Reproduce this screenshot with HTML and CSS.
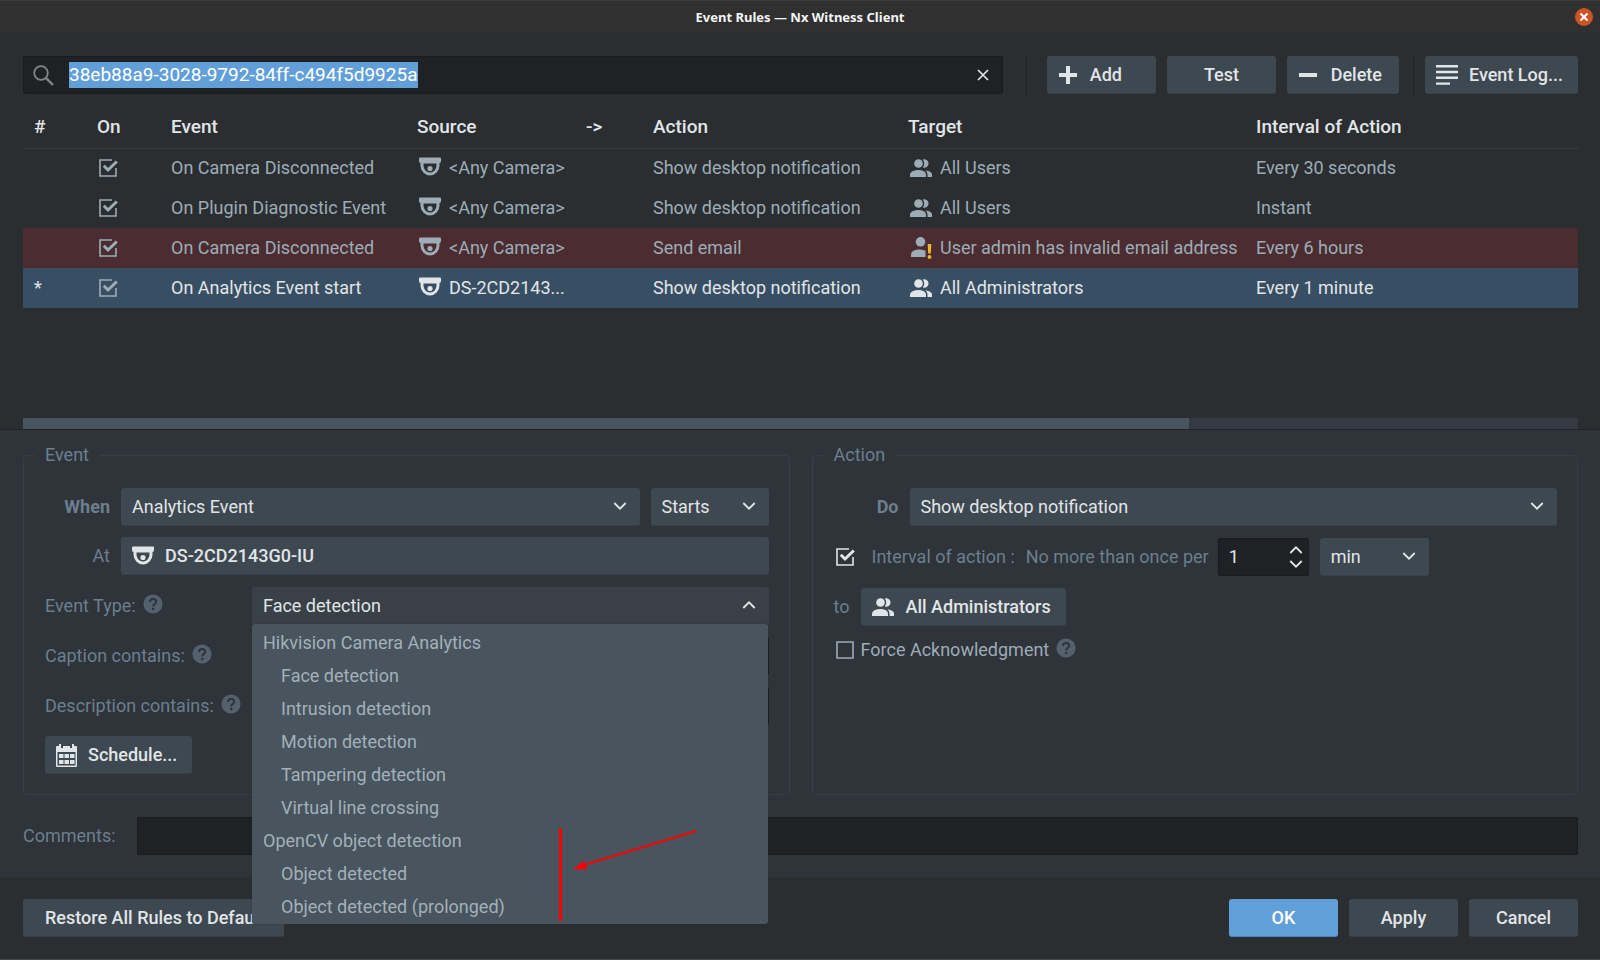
FILE: index.html
```html
<!DOCTYPE html>
<html lang="en">
<head>
<meta charset="utf-8">
<title>Event Rules — Nx Witness Client</title>
<link rel="stylesheet" href="styles.css">
</head>
<body>
<svg class="sprite" aria-hidden="true">
  <symbol id="i-camera" viewBox="0 0 22 20">
    <path d="M0 1.500Q0 .5 1 .5H21Q22 .5 22 1.500V4Q22 6 20.500 6V8.500A9.500 10 0 0 1 1.500 8.500V6Q0 6 0 4Z M4.500 6.500V8.500A6.500 7 0 0 0 17.500 8.500V6.500Z" fill="currentColor" fill-rule="evenodd"/>
    <circle cx="11" cy="11.500" r="2.600" fill="currentColor"/>
  </symbol>
  <symbol id="i-users" viewBox="0 0 22 18">
    <circle cx="8.500" cy="4.500" r="4.300" fill="currentColor"/>
    <path d="M0 18V15.500Q0 13.500 2.500 12.300Q8.500 9.800 14 12.300Q16 13.500 16 15.500V18Z" fill="currentColor"/>
    <path d="M12.800 .6A4.200 4.200 0 1 1 12.800 8.400Q15.600 4.500 12.800 .6Z" fill="currentColor"/>
    <path d="M15.500 11.300Q22 12.500 22 15.500V18H17.500V15.500Q17.500 13 15.500 11.300Z" fill="currentColor"/>
  </symbol>
  <symbol id="i-user-warn" viewBox="0 0 22 22">
    <circle cx="10.500" cy="4.800" r="4.800" fill="currentColor"/>
    <path d="M1 20V17.500Q1 15 3.500 13.700Q9 11.200 15.500 13.700V20Z" fill="currentColor"/>
    <path d="M17.700 7H21.300L20.800 16.500H18.200Z" fill="#efb62b"/>
    <circle cx="19.500" cy="20" r="1.900" fill="#efb62b"/>
  </symbol>
  <symbol id="i-tick" viewBox="0 0 20 18">
    <path d="M13 1H1V17H17V9" fill="none" stroke="currentColor" stroke-width="1.600"/>
    <path d="M4.800 6.800L9 11L17.800 2.500" fill="none" stroke="currentColor" stroke-width="3"/>
  </symbol>
  <symbol id="i-box" viewBox="0 0 20 18">
    <path d="M1 1H17V17H1Z" fill="none" stroke="currentColor" stroke-width="1.600"/>
  </symbol>
  <symbol id="i-down" viewBox="0 0 14 8">
    <path d="M1.300 1L7 6.700L12.700 1" fill="none" stroke="currentColor" stroke-width="1.800"/>
  </symbol>
  <symbol id="i-up" viewBox="0 0 14 8">
    <path d="M1.300 7L7 1.300L12.700 7" fill="none" stroke="currentColor" stroke-width="1.800"/>
  </symbol>
  <symbol id="i-help" viewBox="0 0 20 20">
    <circle cx="10" cy="10" r="9.600" fill="#52616d"/>
    <path d="M7 8Q7 4.900 10.100 4.900Q13.200 4.900 13.200 7.600Q13.200 9 11.500 10.200Q10.200 11 10.200 12.600" fill="none" stroke="#2f333a" stroke-width="2"/>
    <circle cx="10.200" cy="15" r="1.300" fill="#2f333a"/>
  </symbol>
</svg>

<header class="titlebar">
  <h1 class="titlebar-text">Event Rules — Nx Witness Client</h1>
  <button class="window-close" aria-label="Close window">
    <svg width="18" height="18" viewBox="0 0 18 18"><path d="M5.500 5.500L12.500 12.500M12.500 5.500L5.500 12.500" stroke="#fff" stroke-width="2"/></svg>
  </button>
</header>

<main class="rules">
  <div class="toolbar">
    <div class="search">
      <svg class="search-icon" width="21" height="21" viewBox="0 0 21 21"><circle cx="8" cy="8" r="6.800" fill="none" stroke="#7f8588" stroke-width="1.800"/><path d="M12.800 12.800L20 20" stroke="#7f8588" stroke-width="2.400"/></svg>
      <input class="search-input" id="search" type="text" aria-label="Search rules" value="38eb88a9-3028-9792-84ff-c494f5d9925a">
      <button class="search-clear" aria-label="Clear search"><svg width="12" height="12" viewBox="0 0 12 12"><path d="M1 1L11 11M11 1L1 11" stroke="currentColor" stroke-width="1.700"/></svg></button>
    </div>
    <div class="tools">
      <button class="btn btn-tool btn-split"><svg width="18" height="18" viewBox="0 0 18 18"><path d="M9 0V18M0 9H18" stroke="currentColor" stroke-width="4"/></svg><span>Add</span></button>
      <button class="btn btn-tool">Test</button>
      <button class="btn btn-tool btn-split"><svg width="18" height="18" viewBox="0 0 18 18"><path d="M0 9H18" stroke="currentColor" stroke-width="4"/></svg><span>Delete</span></button>
    </div>
    <div class="log">
      <button class="btn btn-icon"><svg width="22" height="20" viewBox="0 0 22 20"><path d="M0 1.200H22M0 7H22M0 12.800H22M0 18.600H14" stroke="currentColor" stroke-width="2.400"/></svg><span>Event Log...</span></button>
    </div>
  </div>

  <table class="table">
    <colgroup><col class="c-num"><col class="c-on"><col class="c-event"><col class="c-source"><col class="c-arrow"><col class="c-action"><col class="c-target"><col></colgroup>
    <thead>
      <tr><th>#</th><th>On</th><th>Event</th><th>Source</th><th>-&gt;</th><th>Action</th><th>Target</th><th>Interval of Action</th></tr>
    </thead>
    <tbody>
      <tr>
        <td></td>
        <td><span class="check"><input type="checkbox" checked aria-label="Rule 1 on"><svg><use href="#i-tick"/></svg></span></td>
        <td>On Camera Disconnected</td>
        <td><span class="cell"><svg class="ic-camera"><use href="#i-camera"/></svg>&lt;Any Camera&gt;</span></td>
        <td></td>
        <td>Show desktop notification</td>
        <td><span class="cell"><svg class="ic-users"><use href="#i-users"/></svg>All Users</span></td>
        <td>Every 30 seconds</td>
      </tr>
      <tr>
        <td></td>
        <td><span class="check"><input type="checkbox" checked aria-label="Rule 2 on"><svg><use href="#i-tick"/></svg></span></td>
        <td>On Plugin Diagnostic Event</td>
        <td><span class="cell"><svg class="ic-camera"><use href="#i-camera"/></svg>&lt;Any Camera&gt;</span></td>
        <td></td>
        <td>Show desktop notification</td>
        <td><span class="cell"><svg class="ic-users"><use href="#i-users"/></svg>All Users</span></td>
        <td>Instant</td>
      </tr>
      <tr class="row-invalid">
        <td></td>
        <td><span class="check"><input type="checkbox" checked aria-label="Rule 3 on"><svg><use href="#i-tick"/></svg></span></td>
        <td>On Camera Disconnected</td>
        <td><span class="cell"><svg class="ic-camera"><use href="#i-camera"/></svg>&lt;Any Camera&gt;</span></td>
        <td></td>
        <td>Send email</td>
        <td><span class="cell"><svg class="ic-warn"><use href="#i-user-warn"/></svg>User admin has invalid email address</span></td>
        <td>Every 6 hours</td>
      </tr>
      <tr class="row-selected">
        <td>*</td>
        <td><span class="check"><input type="checkbox" checked aria-label="Rule 4 on"><svg><use href="#i-tick"/></svg></span></td>
        <td>On Analytics Event start</td>
        <td><span class="cell"><svg class="ic-camera"><use href="#i-camera"/></svg>DS-2CD2143...</span></td>
        <td></td>
        <td>Show desktop notification</td>
        <td><span class="cell"><svg class="ic-users"><use href="#i-users"/></svg>All Administrators</span></td>
        <td>Every 1 minute</td>
      </tr>
    </tbody>
  </table>
  <div class="scrollbar"><div class="scrollbar-thumb"></div></div>
</main>

<section class="editor">
  <div class="groups">
    <fieldset class="group group-event">
      <legend>Event</legend>
      <div class="line line-short">
        <label class="strong" for="when">When</label>
        <div class="pair">
          <div class="select"><select id="when"><option>Analytics Event</option></select><svg><use href="#i-down"/></svg></div>
          <div class="select select-starts"><select aria-label="Event state"><option>Starts</option></select><svg><use href="#i-down"/></svg></div>
        </div>
      </div>
      <div class="line line-short">
        <label for="at">At</label>
        <button class="btn btn-icon btn-wide" id="at"><svg class="ic-camera"><use href="#i-camera"/></svg><span>DS-2CD2143G0-IU</span></button>
      </div>
      <div class="line line-long">
        <div class="caption"><label for="type">Event Type:</label><svg class="help"><use href="#i-help"/></svg></div>
        <div class="combo">
          <div class="select select-open"><select id="type"><option>Face detection</option></select><svg><use href="#i-up"/></svg></div>
          <div class="menu">
            <ul class="menu-list" role="listbox" aria-label="Event types">
              <li>Hikvision Camera Analytics</li>
              <li class="sub" role="option">Face detection</li>
              <li class="sub" role="option">Intrusion detection</li>
              <li class="sub" role="option">Motion detection</li>
              <li class="sub" role="option">Tampering detection</li>
              <li class="sub" role="option">Virtual line crossing</li>
              <li>OpenCV object detection</li>
              <li class="sub" role="option">Object detected</li>
              <li class="sub" role="option">Object detected (prolonged)</li>
            </ul>
            <svg class="marker" width="140" height="96" viewBox="0 0 140 96" aria-hidden="true">
              <path d="M2.500 1V94" stroke="#f00" stroke-width="3"/>
              <path d="M138 4L26 38" stroke="#f00" stroke-width="2"/>
              <path d="M15 42L26 34L29 42.500Z" fill="#f00"/>
            </svg>
          </div>
        </div>
      </div>
      <div class="line line-long">
        <div class="caption"><label for="cap">Caption contains:</label><svg class="help"><use href="#i-help"/></svg></div>
        <input class="field" id="cap" type="text">
      </div>
      <div class="line line-long">
        <div class="caption"><label for="desc">Description contains:</label><svg class="help"><use href="#i-help"/></svg></div>
        <input class="field" id="desc" type="text">
      </div>
      <div class="line">
        <button class="btn btn-icon btn-schedule"><svg width="21" height="24" viewBox="0 0 21 24"><path d="M0 4Q0 3 1 3H3V1H5V5H7V3H14V5H16V1H18V3H20Q21 3 21 4V23Q21 24 20 24H1Q0 24 0 23Z M1.500 9V22.500H19.500V9Z" fill="currentColor" fill-rule="evenodd"/><path d="M3 11H7.500V15H3ZM8.500 11H13V15H8.500ZM14 11H18.500V15H14ZM3 17H7.500V21H3ZM8.500 17H13V21H8.500ZM14 17H18.500V21H14Z" fill="currentColor"/></svg><span>Schedule...</span></button>
      </div>
    </fieldset>

    <fieldset class="group group-action">
      <legend>Action</legend>
      <div class="line line-short">
        <label class="strong" for="do">Do</label>
        <div class="select"><select id="do"><option>Show desktop notification</option></select><svg><use href="#i-down"/></svg></div>
      </div>
      <div class="line interval">
        <span class="check check-bright"><input id="interval" type="checkbox" checked><svg><use href="#i-tick"/></svg></span>
        <label for="interval">Interval of action :</label>
        <label class="once" for="count">No more than once per</label>
        <div class="spin">
          <input id="count" type="text" inputmode="numeric" value="1">
          <div class="spin-buttons">
            <button aria-label="Increase"><svg><use href="#i-up"/></svg></button>
            <button aria-label="Decrease"><svg><use href="#i-down"/></svg></button>
          </div>
        </div>
        <div class="select select-unit"><select aria-label="Unit"><option>min</option></select><svg><use href="#i-down"/></svg></div>
      </div>
      <div class="line to">
        <label for="recipients">to</label>
        <button class="btn btn-icon" id="recipients"><svg class="ic-users"><use href="#i-users"/></svg><span>All Administrators</span></button>
      </div>
      <div class="force">
        <span class="check"><input id="force" type="checkbox"><svg><use href="#i-box"/></svg></span>
        <label for="force">Force Acknowledgment</label>
        <svg class="help"><use href="#i-help"/></svg>
      </div>
    </fieldset>
  </div>
  <div class="comments">
    <label for="comments">Comments:</label>
    <input class="field" id="comments" type="text">
  </div>
</section>

<footer class="footer">
  <button class="btn btn-restore">Restore All Rules to Default</button>
  <div class="footer-actions">
    <button class="btn btn-primary">OK</button>
    <button class="btn">Apply</button>
    <button class="btn">Cancel</button>
  </div>
</footer>
<script src="app.js"></script>
</body>
</html>
```
FILE: styles.css
```css
* { box-sizing: border-box; }

body {
  margin: 0;
  min-height: 100vh;
  display: flex;
  flex-direction: column;
  background: #2a2e31;
  border-bottom: 1px solid #4a4a4c;
  color: #6b7f8e;
  font: 18px/22px Roboto, "Liberation Sans", sans-serif;
}

button, input, select { font: inherit; color: inherit; margin: 0; }
button { border: 0; padding: 0; background: none; }
.sprite { position: absolute; width: 0; height: 0; }
svg { flex: none; display: block; }

.titlebar {
  display: grid;
  grid-template-columns: 1fr auto 1fr;
  align-items: center;
  height: 33px;
  padding: 0 7px;
  background: #303030;
  border-top: 1px solid #3c3c3c;
}
.titlebar-text {
  grid-column: 2;
  margin: 0;
  color: #f5f5f5;
  font: 700 13px/20px "Noto Sans", "Open Sans", sans-serif;
}
.window-close {
  justify-self: end;
  width: 18px;
  height: 18px;
  border-radius: 50%;
  background: #cc5427;
}

.rules {
  flex: 1;
  display: flex;
  flex-direction: column;
  padding: 23px 22px 0 23px;
}
.toolbar { display: flex; align-items: stretch; }
.search {
  flex: 1;
  display: flex;
  align-items: center;
  height: 38px;
  margin-right: 23px;
  padding: 0 13px 0 9px;
  background: #1f2224;
  border: 1px solid #191c1e;
  border-radius: 2px;
}
.search-input {
  flex: 1;
  min-width: 0;
  height: 26px;
  margin-left: 15px;
  padding: 0;
  border: 0;
  outline: 0;
  background: none;
  color: #fff;
  font-size: 19px;
  line-height: 26px;
}
.search-input::selection { background: #629fd9; color: #fff; }
.search-clear { color: #e1e4e6; }
.tools { display: flex; gap: 11px; padding-left: 20px; border-left: 1px solid #1f2224; }
.log { margin-left: 14px; padding-left: 11px; border-left: 1px solid #1f2224; }

.btn {
  display: flex;
  align-items: center;
  justify-content: center;
  height: 38px;
  min-width: 109px;
  background: #3e4850;
  border-bottom: 1px solid #384149;
  border-radius: 3px;
  color: #e1e5e8;
  font-weight: 500;
}
.btn-split { justify-content: space-between; padding: 0 34px 0 12px; }
.btn-split:last-child { width: 112px; padding-right: 17px; }
.btn-icon { gap: 11px; padding: 0 15px 0 11px; }

.table { width: 100%; border-collapse: collapse; table-layout: fixed; color: #9dacb6; }
.c-num { width: 63px; }
.c-on { width: 74px; }
.c-event { width: 246px; }
.c-source { width: 169px; }
.c-arrow { width: 67px; }
.c-action { width: 255px; }
.c-target { width: 348px; }
.table th {
  height: 54px;
  padding: 12px 0 0 11px;
  border-bottom: 1px solid #383e43;
  color: #e1e5e8;
  font-size: 19px;
  font-weight: 500;
  text-align: left;
}
.table td { height: 40px; padding: 0 0 0 11px; white-space: nowrap; }
.row-invalid { background: #4b2d31; }
.row-selected { background: #384e63; color: #e1e5e8; }
.cell { display: flex; align-items: center; gap: 8px; }
.ic-camera { width: 22px; height: 20px; }
.cell .ic-camera { margin: 0 0 3px 2px; }
.ic-users { width: 22px; height: 18px; }
.ic-warn { width: 22px; height: 22px; }
.cell .ic-users, .cell .ic-warn { margin-left: 2px; }

.check { display: grid; width: 20px; height: 18px; margin-left: 2px; color: #9dacb6; }
.check input { grid-area: 1 / 1; width: 18px; height: 18px; appearance: none; }
.check svg { grid-area: 1 / 1; width: 20px; height: 18px; pointer-events: none; }
.check-bright { color: #e1e5e8; }

.scrollbar { height: 11px; margin-top: auto; background: #343a41; }
.scrollbar-thumb { width: 75%; height: 100%; background: #48545e; }

.editor {
  padding: 15px 22px 22px 23px;
  background: #2f333a;
  border-top: 1px solid #212527;
}
.groups { display: grid; grid-template-columns: 1fr 1fr; gap: 22px; }
.group {
  display: flex;
  flex-direction: column;
  gap: 11px;
  min-width: 0;
  margin: 0;
  padding: 23px 20px 20px 21px;
  border: 1px solid #383e45;
  border-radius: 4px;
}
.group legend { margin-left: -11px; padding: 0 11px; line-height: 20px; }
.group-action { gap: 12px; }
.line { display: grid; align-items: center; min-height: 38px; }
.line-short { grid-template-columns: 65px minmax(0, 1fr); gap: 11px; }
.line-short > label { text-align: right; }
.line-long { grid-template-columns: 196px minmax(0, 1fr); gap: 11px; min-height: 39px; }
.strong { font-weight: 700; }
.pair { display: flex; gap: 11px; }
.caption, .force { display: flex; align-items: center; gap: 7px; white-space: nowrap; }
.help { width: 20px; height: 20px; margin-bottom: 3px; }

.select { flex: 1; display: grid; align-items: center; color: #e1e5e8; }
.select select {
  grid-area: 1 / 1;
  width: 100%;
  height: 38px;
  padding: 0 11px;
  appearance: none;
  background: #3e4850;
  border: 0;
  border-bottom: 1px solid #384149;
  border-radius: 3px;
}
.select svg, .spin svg { width: 14px; height: 8px; }
.select svg { grid-area: 1 / 1; justify-self: end; margin: 0 13px 2px 0; pointer-events: none; }
.select-starts { flex: 0 0 118px; }
.select-open select { background: #394047; }

.btn-wide { justify-content: flex-start; }
.btn-schedule { justify-self: start; }

.combo { position: relative; align-self: end; }
.menu {
  position: absolute;
  z-index: 1;
  top: 37px;
  left: 0;
  right: 1px;
  padding: 2px 0 1px;
  background: #48545e;
  border-radius: 3px;
  color: #a3b0b9;
  box-shadow: 0 0 1px #22272a;
}
.menu-list { margin: 0; padding: 0; list-style: none; }
.menu-list li { padding: 0 11px; line-height: 33px; }
.menu-list .sub { padding-left: 29px; }
.marker { position: absolute; left: 306px; bottom: 1px; }

.field {
  width: 100%;
  height: 38px;
  padding: 0 11px;
  background: #1f2224;
  border: 1px solid #191c1e;
  border-radius: 2px;
}

.interval { display: flex; }
.interval .check { margin: 0 16px 0 2px; }
.once { margin-left: 11px; }
.spin {
  display: flex;
  width: 91px;
  height: 38px;
  margin: 0 11px 0 9px;
  background: #1f2224;
  border: 1px solid #191c1e;
  border-radius: 2px;
  color: #e1e5e8;
}
.spin input { flex: 1; min-width: 0; padding: 0 0 0 10px; border: 0; background: none; }
.spin-buttons { display: flex; flex-direction: column; justify-content: space-evenly; padding: 0 5px; }
.interval .select-unit { flex: 0 0 109px; }
.to { display: flex; gap: 12px; }
.force { color: #9dacb6; }
.force .check { margin: 0 -2px 0 2px; }

.comments { display: flex; align-items: center; gap: 21px; margin-top: 22px; }

.footer { display: flex; justify-content: space-between; padding: 22px 22px 22px 23px; }
.btn-restore { padding: 0 19px 0 22px; }
.footer-actions { display: flex; gap: 11px; }
.btn-primary { background: #629fd9; border-bottom-color: #4a86bd; color: #fff; }
```
FILE: app.js
```js
const search = document.getElementById("search");
search.focus();
search.select();
```
